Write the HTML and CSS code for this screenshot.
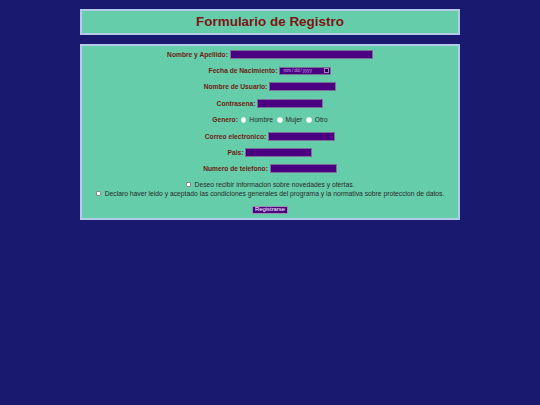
FILE: index.html
```html
<!DOCTYPE html>
<html lang="es">
<head>
<meta charset="utf-8">
<title>Formulario de Registro</title>
<link rel="stylesheet" href="styles.css">
</head>
<body>
<header class="banner">
  <h1 class="title">Formulario de Registro</h1>
</header>
<form class="card">
  <p class="row"><label class="lbl" for="nombre">Nombre y Apellido:</label><input class="field field-wide" id="nombre" type="text"></p>
  <p class="row"><label class="lbl" for="fecha">Fecha de Nacimiento:</label><input class="field field-date" id="fecha" type="date"></p>
  <p class="row"><label class="lbl" for="usuario">Nombre de Usuario:</label><input class="field" id="usuario" type="text"></p>
  <p class="row"><label class="lbl" for="pass">Contrasena:</label><input class="field field-pass" id="pass" type="password"></p>
  <p class="row row-radio"><span class="lbl">Genero:</span>
    <label class="opt"><input class="radio" type="radio" name="genero">Hombre</label>
    <label class="opt"><input class="radio" type="radio" name="genero">Mujer</label>
    <label class="opt"><input class="radio" type="radio" name="genero">Otro</label>
  </p>
  <p class="row"><label class="lbl" for="correo">Correo electronico:</label><input class="field" id="correo" type="email"></p>
  <p class="row"><label class="lbl" for="pais">Pais:</label><input class="field" id="pais" type="text"></p>
  <p class="row"><label class="lbl" for="tel">Numero de telefono:</label><input class="field" id="tel" type="tel"></p>
  <div class="checks">
    <label class="check"><input class="box" type="checkbox">Deseo recibir informacion sobre novedades y ofertas.</label>
    <label class="check"><input class="box" type="checkbox">Declaro haver leido y aceptado las condiciones generales del programa y la normativa sobre proteccion de datos.</label>
  </div>
  <p class="actions"><button class="btn" type="submit">Registrarse</button></p>
</form>
</body>
</html>
```
FILE: styles.css
```css
html, body {
  background: #191970;
}
body {
  margin: 0;
  padding-top: 9px;
  font-family: "Liberation Sans", Arial, sans-serif;
}
.banner {
  box-sizing: border-box;
  width: 380px;
  height: 26px;
  margin: 0 auto;
  background: #66cdaa;
  border: 2px solid #b4cbe8;
  display: flex;
  align-items: center;
  justify-content: center;
}
.title {
  margin: 0;
  font-size: 13.45px;
  line-height: 1;
  font-weight: bold;
  color: #7d1414;
}
.card {
  box-sizing: border-box;
  width: 380px;
  margin: 9px auto 0;
  background: #66cdaa;
  border: 2px solid #b4cbe8;
  padding: 0 0 4px;
  font-size: 6.67px;
}
.row {
  margin: 0;
  height: 16.4px;
  display: flex;
  align-items: center;
  justify-content: center;
  gap: 2px;
}
.lbl {
  font-weight: bold;
  color: #6e1a12;
}
.field {
  box-sizing: border-box;
  width: 67px;
  height: 9px;
  margin: 0;
  padding: 0 1px;
  background: #4b0082;
  border: 1px solid #7c6f95;
  color: #d8c0f0;
  font-size: 5px;
  font-family: inherit;
}
.field-wide {
  width: 143px;
}
.field-pass {
  width: 66px;
}
.field-date {
  width: 52px;
  height: 8px;
  font-size: 4.6px;
  color: #c9a8ee;
  padding: 0 1px 0 2px;
}
.field-date::-webkit-datetime-edit {
  padding: 0;
}
.field-date::-webkit-calendar-picker-indicator {
  box-sizing: border-box;
  width: 5px;
  height: 5px;
  padding: 0;
  margin: 0 0 0 2px;
  background: #2a0048;
  border: 0.5px solid #9a86c0;
  border-radius: 0.5px;
}
.row-radio {
  gap: 0;
}
.opt {
  display: inline-flex;
  align-items: center;
  gap: 3px;
  margin-left: 4px;
  color: #2a2a2a;
}
.row-radio .opt:first-of-type {
  margin-left: 3px;
}
.radio {
  appearance: none;
  -webkit-appearance: none;
  box-sizing: border-box;
  width: 5.5px;
  height: 5.5px;
  margin: 0;
  border-radius: 50%;
  background: #ffffff;
  border: 0.5px solid #e4ece8;
}
.checks {
  padding-top: 3.3px;
}
.check {
  height: 9px;
  display: flex;
  align-items: center;
  justify-content: center;
  gap: 4px;
  color: #2a2a2a;
  font-size: 6.76px;
}
.box {
  appearance: none;
  -webkit-appearance: none;
  box-sizing: border-box;
  width: 5px;
  height: 5px;
  margin: 0;
  background: #ffffff;
  border: 0.5px solid #8a8a8a;
  border-radius: 1px;
}
.actions {
  margin: 7.5px 0 0;
  display: flex;
  justify-content: center;
}
.btn {
  box-sizing: border-box;
  height: 8.5px;
  margin: 0;
  padding: 0 2px;
  background: #4b0082;
  color: #ffffff;
  border: 1px solid #9a8fb0;
  font-family: inherit;
  font-weight: normal;
  font-size: 5.9px;
  line-height: 1;
}
```
